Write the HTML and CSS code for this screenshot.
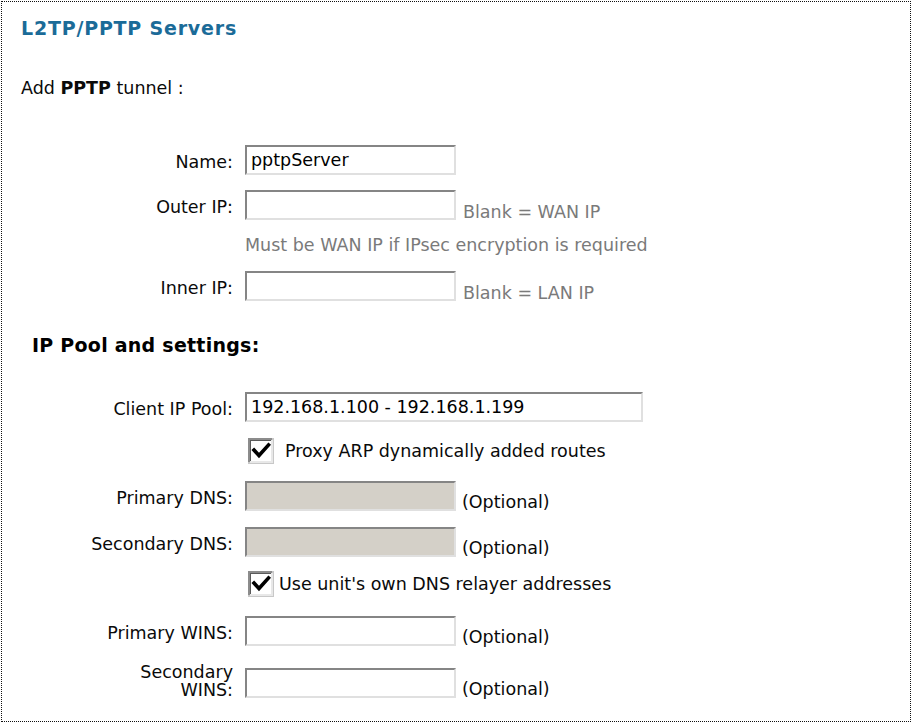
FILE: index.html
```html
<!DOCTYPE html>
<html>
<head>
<meta charset="utf-8">
<title>L2TP/PPTP Servers</title>
<link rel="stylesheet" href="styles.css">
</head>
<body>
<div class="panel">
  <h1 class="title">L2TP/PPTP Servers</h1>
  <p class="intro">Add <b>PPTP</b> tunnel :</p>

  <div class="row row-name">
    <label class="lbl">Name:</label>
    <input class="field" type="text" value="pptpServer">
  </div>
  <div class="row row-outer">
    <label class="lbl">Outer IP:</label>
    <input class="field" type="text" value="">
    <span class="hint">Blank = WAN IP</span>
  </div>
  <div class="note">Must be WAN IP if IPsec encryption is required</div>
  <div class="row row-inner">
    <label class="lbl">Inner IP:</label>
    <input class="field" type="text" value="">
    <span class="hint">Blank = LAN IP</span>
  </div>

  <h2 class="section">IP Pool and settings:</h2>

  <div class="row row-pool">
    <label class="lbl">Client IP Pool:</label>
    <input class="field wide" type="text" value="192.168.1.100 - 192.168.1.199">
  </div>
  <div class="check check-arp">
    <svg class="box" width="26" height="26" viewBox="0 0 26 26">
      <rect x="0" y="0" width="26" height="26" fill="#c8c8c8"/>
      <rect x="0" y="0" width="24" height="24" fill="#8c8c8c"/>
      <rect x="2" y="2" width="23" height="23" fill="#e8e8e8"/>
      <rect x="2" y="2" width="21" height="21" fill="#5a5a5a"/>
      <rect x="3" y="3" width="20" height="20" fill="#ffffff"/>
      <path d="M6 12 L11 17.5 L20.5 7" fill="none" stroke="#000" stroke-width="3.6" stroke-linecap="square" stroke-linejoin="miter"/>
    </svg>
    <span class="ctext gap-wide">Proxy ARP dynamically added routes</span>
  </div>
  <div class="row row-pdns">
    <label class="lbl">Primary DNS:</label>
    <input class="field disabled" type="text" value="" disabled>
    <span class="opt">(Optional)</span>
  </div>
  <div class="row row-sdns">
    <label class="lbl">Secondary DNS:</label>
    <input class="field disabled" type="text" value="" disabled>
    <span class="opt">(Optional)</span>
  </div>
  <div class="check check-dns">
    <svg class="box" width="26" height="26" viewBox="0 0 26 26">
      <rect x="0" y="0" width="26" height="26" fill="#c8c8c8"/>
      <rect x="0" y="0" width="24" height="24" fill="#8c8c8c"/>
      <rect x="2" y="2" width="23" height="23" fill="#e8e8e8"/>
      <rect x="2" y="2" width="21" height="21" fill="#5a5a5a"/>
      <rect x="3" y="3" width="20" height="20" fill="#ffffff"/>
      <path d="M6 12 L11 17.5 L20.5 7" fill="none" stroke="#000" stroke-width="3.6" stroke-linecap="square" stroke-linejoin="miter"/>
    </svg>
    <span class="ctext gap-narrow">Use unit's own DNS relayer addresses</span>
  </div>
  <div class="row row-pwins">
    <label class="lbl">Primary WINS:</label>
    <input class="field" type="text" value="">
    <span class="opt">(Optional)</span>
  </div>
  <div class="row row-swins">
    <label class="lbl two">Secondary<br>WINS:</label>
    <input class="field" type="text" value="">
    <span class="opt">(Optional)</span>
  </div>
</div>
</body>
</html>
```
FILE: styles.css
```css
html, body {
  margin: 0;
  padding: 0;
  background: #ffffff;
}

body {
  font-family: "DejaVu Sans", Verdana, sans-serif;
  font-size: 17.5px;
  color: #0a0a0a;
}

.panel {
  box-sizing: border-box;
  margin: 1px 0 0 1px;
  width: 910px;
  height: 721px;
  border: 1px dotted #111111;
  padding: 14px 0 0 19px;
  overflow: hidden;
}

.title {
  margin: 0;
  font-size: 19px;
  line-height: 24px;
  font-weight: bold;
  letter-spacing: 0.8px;
  color: #1b6b98;
}

.intro {
  margin: 37px 0 0 0;
  line-height: 22px;
}

.intro b {
  font-weight: bold;
}

.row {
  display: flex;
  align-items: center;
  height: 30px;
}

.lbl {
  width: 212px;
  flex: 0 0 212px;
  text-align: right;
  line-height: 22px;
  padding-top: 3px;
  margin-right: 12px;
}

.lbl.two {
  line-height: 18px;
  padding-top: 0;
  margin-top: -4px;
}

.field {
  box-sizing: border-box;
  width: 211px;
  height: 30px;
  margin: 0;
  padding: 0 4px;
  font-family: "DejaVu Sans", Verdana, sans-serif;
  font-size: 17.5px;
  color: #000000;
  background: #ffffff;
  border-style: solid;
  border-width: 2px;
  border-color: #858585 #e0e0e0 #e0e0e0 #858585;
  outline: none;
}

.field.wide {
  width: 398px;
}

.field.disabled {
  background: #d4d0c8;
}

.hint,
.opt {
  align-self: flex-end;
  line-height: 22px;
  margin-bottom: -3px;
  color: #7a7a7a;
}

.hint {
  margin-left: 7px;
}

.opt {
  margin-left: 6px;
  color: #0a0a0a;
  margin-bottom: -2px;
}

.row-name { margin-top: 46px; }
.row-outer { margin-top: 15px; }

.note {
  margin: 14px 0 0 224px;
  line-height: 22px;
  color: #7a7a7a;
}

.row-inner { margin-top: 15px; }

.section {
  margin: 32px 0 0 11px;
  font-size: 19px;
  line-height: 24px;
  font-weight: bold;
  letter-spacing: 0.25px;
  color: #000000;
}

.row-pool { margin-top: 35px; }

.check {
  display: flex;
  align-items: center;
  height: 26px;
  padding-left: 227px;
}

.box {
  display: block;
  flex: 0 0 26px;
}

.ctext {
  line-height: 22px;
}

.gap-wide { margin-left: 11px; }
.gap-narrow { margin-left: 5px; }

.check-arp { margin-top: 16px; }
.row-pdns { margin-top: 17px; }
.row-sdns { margin-top: 16px; }
.check-dns { margin-top: 14px; }
.row-pwins { margin-top: 19px; }
.row-swins { margin-top: 22px; }
```
